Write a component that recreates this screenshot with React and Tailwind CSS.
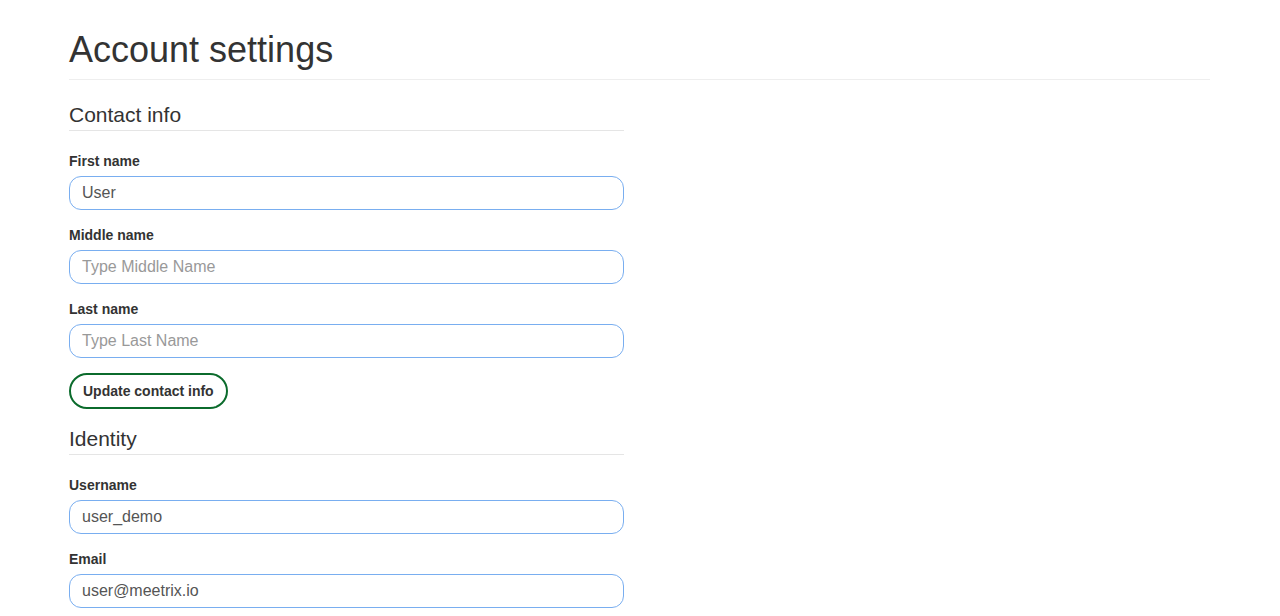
import React from 'react'

function Field({ label, value, placeholder }) {
  return (
    <div className="mb-[15px]">
      <label className="block text-[14px] leading-[20px] font-bold text-[#333] mb-[5px]">{label}</label>
      <input
        type="text"
        defaultValue={value}
        placeholder={placeholder}
        className="block w-full h-[34px] px-[12px] rounded-[12px] border border-[#79aef0] bg-white text-[16px] text-[#555] placeholder:text-[#999] outline-none"
      />
    </div>
  )
}

function Legend({ children }) {
  return (
    <div className="text-[21px] leading-[30px] text-[#333] border-b border-[#e5e5e5] mb-[20px]">
      {children}
    </div>
  )
}

export default function App() {
  return (
    <div className="min-h-screen bg-white font-['Liberation_Sans',Arial,sans-serif] text-[#333]">
      <div className="w-[1171px] ml-[54px] px-[15px] pt-[30px]">
        <div className="pb-[9px] border-b border-[#eee] mb-[20px]">
          <h1 className="text-[36px] leading-[40px] font-normal">Account settings</h1>
        </div>
        <div className="w-[555px]">
          <Legend>Contact info</Legend>
          <Field label="First name" value="User" />
          <Field label="Middle name" placeholder="Type Middle Name" />
          <Field label="Last name" placeholder="Type Last Name" />
          <button className="h-[36px] px-[12px] rounded-full border-2 border-[#0b6b2c] bg-white text-[14px] font-bold text-[#333] mb-[15px]">
            Update contact info
          </button>
          <Legend>Identity</Legend>
          <Field label="Username" value="user_demo" />
          <Field label="Email" value="user@meetrix.io" />
        </div>
      </div>
    </div>
  )
}
